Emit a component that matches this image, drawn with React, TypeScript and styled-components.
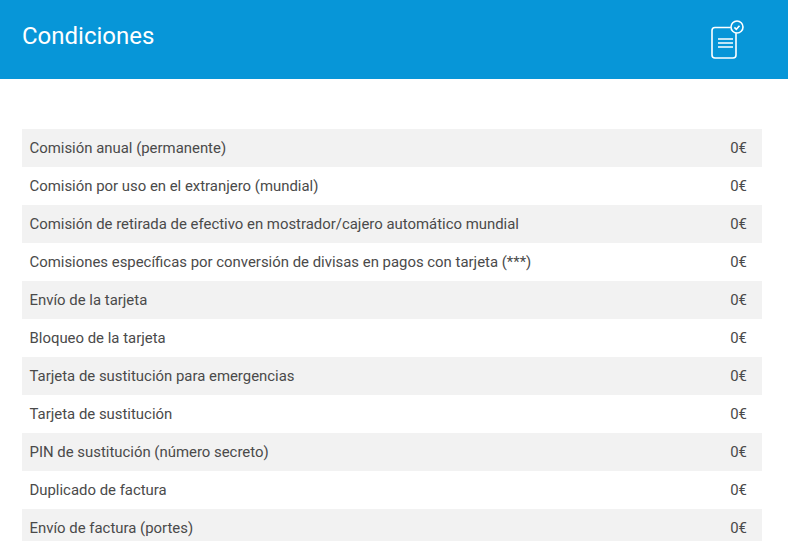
import React from "react";
import styled, { createGlobalStyle } from "styled-components";

const Global = createGlobalStyle`
  html, body { margin: 0; padding: 0; background: #fff; overflow: hidden; }
  body { font-family: Roboto, "Liberation Sans", sans-serif; }
`;
const Page = styled.div`
  width: 788px;
  height: 541px;
  overflow: hidden;
`;
const Header = styled.header`
  height: 79px;
  background: #0796d8;
  display: flex;
  justify-content: space-between;
  align-items: flex-start;
  padding: 0 42px 0 22px;
  box-sizing: border-box;
`;
const Title = styled.h1`
  margin: 20px 0 0;
  font-size: 24px;
  line-height: 32px;
  font-weight: 400;
  color: #fff;
`;
const Icon = styled.svg`
  width: 36px;
  height: 40px;
  margin-top: 20px;
  display: block;
`;
const Table = styled.div`
  margin: 50px 26px 0 22px;
  display: flex;
  flex-direction: column;
`;
const Row = styled.div<{ $shaded: boolean }>`
  height: 38px;
  flex: none;
  display: flex;
  justify-content: space-between;
  align-items: center;
  padding: 0 15px 0 7.5px;
  font-size: 14.91px;
  color: #4a4a4a;
  background: ${(p) => (p.$shaded ? "#f2f2f2" : "#fff")};
`;
const rows = [
  "Comisión anual (permanente)",
  "Comisión por uso en el extranjero (mundial)",
  "Comisión de retirada de efectivo en mostrador/cajero automático mundial",
  "Comisiones específicas por conversión de divisas en pagos con tarjeta (***)",
  "Envío de la tarjeta",
  "Bloqueo de la tarjeta",
  "Tarjeta de sustitución para emergencias",
  "Tarjeta de sustitución",
  "PIN de sustitución (número secreto)",
  "Duplicado de factura",
  "Envío de factura (portes)",
];
export default function App() {
  return (
    <Page>
      <Global />
      <Header>
        <Title>Condiciones</Title>
        <Icon viewBox="0 0 36 40" fill="none" stroke="#fff" strokeWidth="1.6">
          <path d="M20 7.5H5a3 3 0 0 0-3 3v24.5a3 3 0 0 0 3 3h18a3 3 0 0 0 3-3V13.5" strokeLinecap="round" />
          <path d="M8 19h15M8 23h15M8 27h15" />
          <circle cx="27" cy="7" r="6" />
          <path d="M24.4 7.4l1.9 1.9 3.2-3.6" strokeWidth="1.6" />
        </Icon>
      </Header>
      <Table>
        {rows.map((r, i) => (
          <Row key={r} $shaded={i % 2 === 0}>
            <span>{r}</span>
            <span>0€</span>
          </Row>
        ))}
      </Table>
    </Page>
  );
}
